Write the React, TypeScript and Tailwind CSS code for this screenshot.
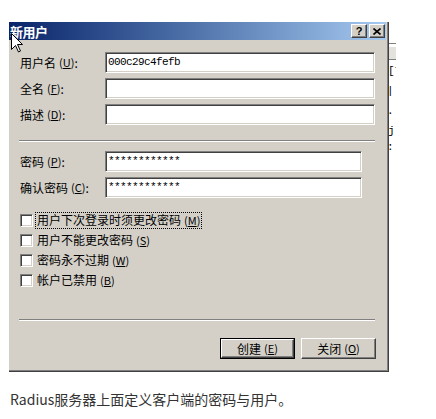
import type { ReactNode } from 'react';

const sunken =
  'bg-white border border-t-[#808080] border-l-[#808080] border-r-white border-b-white shadow-[inset_1px_1px_0_#404040,inset_-1px_-1px_0_#d4d0c8]';
const raised =
  'bg-[#d4d0c8] border border-t-white border-l-white border-r-[#404040] border-b-[#404040] shadow-[inset_-1px_-1px_0_#808080]';

function Key({ k }: { k: string }) {
  return (
    <span className="text-[11px] ml-[3px]">
      (<span className="underline underline-offset-1">{k}</span>)
    </span>
  );
}

function Label({ text, k }: { text: string; k: string }) {
  return (
    <div className="w-[85px] shrink-0 flex items-center whitespace-nowrap">
      {text}
      <Key k={k} />:
    </div>
  );
}

function Field({ label, k, value, w }: { label: string; k: string; value?: string; w: string }) {
  return (
    <div className="flex h-[21px] items-center">
      <Label text={label} k={k} />
      <div className={`${sunken} ${w} h-[21px] flex items-center pl-[2px] font-['Liberation_Mono',monospace] text-[11px] tracking-[-0.6px] text-black`}>
        {value}
      </div>
    </div>
  );
}

function Check({ children, focus }: { children: ReactNode; focus?: boolean }) {
  return (
    <div className="flex items-center h-[20px]">
      <div className={`${sunken} w-[13px] h-[13px] shrink-0`} />
      <div
        className={`ml-[2px] px-[1px] h-[17px] flex items-center border ${
          focus ? 'border-dotted border-black' : 'border-transparent'
        }`}
      >
        {children}
      </div>
    </div>
  );
}

function Separator() {
  return <div className="ml-[-1px] w-[356px] h-[2px] border-t border-t-[#808080] border-b border-b-white" />;
}

export default function App() {
  return (
    <div className="relative min-h-screen bg-white font-['Noto_Sans_CJK_SC',sans-serif] text-[12px] leading-none text-black">
      <div className="flex pt-[22px] pl-[9px]">
        {/* dialog */}
        <div className="w-[380px] h-[350px] bg-[#d4d0c8] shadow-[inset_-1px_-1px_0_#404040,inset_-2px_-2px_0_#808080] flex flex-col">
          {/* title bar */}
          <div className="mr-[3px] h-[18px] flex items-center justify-between bg-gradient-to-r from-[#0a246a] to-[#a6caf0]">
            <span className="pl-[1px] text-white font-bold text-[13px] tracking-[-0.5px]">新用户</span>
            <div className="flex gap-[2px] pr-[1px]">
              <div className={`${raised} w-[16px] h-[14px] flex items-center justify-center font-['Liberation_Sans',sans-serif] font-bold text-[11px]`}>
                ?
              </div>
              <div className={`${raised} w-[16px] h-[14px] flex items-center justify-center`}>
                <svg width="8" height="7" viewBox="0 0 8 7">
                  <path d="M0.5 0.5 L7.5 6.5 M7.5 0.5 L0.5 6.5" stroke="#000" strokeWidth="1.6" />
                </svg>
              </div>
            </div>
          </div>

          {/* content */}
          <div className="pl-[11px] flex flex-col">
            <div className="mt-[12px] flex flex-col gap-[5px]">
              <Field label="用户名" k="U" value="000c29c4fefb" w="w-[270px]" />
              <Field label="全名" k="F" w="w-[270px]" />
              <Field label="描述" k="D" w="w-[270px]" />
            </div>

            <div className="mt-[15px]">
              <Separator />
            </div>

            <div className="mt-[9px] flex flex-col gap-[5px]">
              <Field label="密码" k="P" value="************" w="w-[257px]" />
              <Field label="确认密码" k="C" value="************" w="w-[257px]" />
            </div>

            <div className="mt-[12px] flex flex-col">
              <Check focus>
                用户下次登录时须更改密码
                <Key k="M" />
              </Check>
              <Check>
                用户不能更改密码
                <Key k="S" />
              </Check>
              <Check>
                密码永不过期
                <Key k="W" />
              </Check>
              <Check>
                帐户已禁用
                <Key k="B" />
              </Check>
            </div>

            <div className="mt-[29px]">
              <Separator />
            </div>

            <div className="mt-[17px] flex justify-end gap-[6px] pr-[13px]">
              <div className="border border-black w-[75px] h-[21px]">
                <div className={`${raised} w-full h-full flex items-center justify-center`}>
                  创建
                  <Key k="E" />
                </div>
              </div>
              <div className={`${raised} w-[75px] h-[21px] flex items-center justify-center`}>
                关闭
                <Key k="O" />
              </div>
            </div>
          </div>
        </div>

        {/* clipped background window */}
        <div className="w-[7px] overflow-hidden flex flex-col font-['Liberation_Mono',monospace] text-[11px] leading-none">
          <div className="mt-[21px] h-px bg-[#808080]" />
          <div className="mt-[3px] h-[13px] bg-[#e4e2dc] border-b border-b-[#808080]" />
          <div className="mt-[6px] h-[12px] -ml-[1px]">[7</div>
          <div className="mt-[8px] h-[12px] -ml-[2px]">|</div>
          <div className="mt-[8px] h-[8px] -ml-[2px]">.</div>
          <div className="mt-[12px] h-[12px] -ml-[1px]">j</div>
          <div className="mt-[4px] h-[12px] -ml-[2px]">:</div>
        </div>
      </div>

      <div className="mt-[17px] pl-[10px] text-[14px] leading-[20px] text-[#333333]">
        Radius服务器上面定义客户端的密码与用户。
      </div>

      {/* mouse pointer */}
      <svg className="absolute left-[11px] top-[33px]" width="13" height="20" viewBox="0 0 13 20">
        <path d="M0.5 0.5 L0.5 16.5 L4.5 12.5 L7.5 19 L9.5 18 L6.5 11.5 L11.5 11.5 Z" fill="#fff" stroke="#000" strokeWidth="1" />
      </svg>
    </div>
  );
}
